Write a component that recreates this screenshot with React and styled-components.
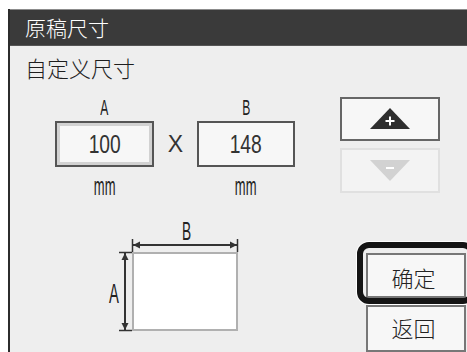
import React from 'react';
import styled, { createGlobalStyle } from 'styled-components';

const Global = createGlobalStyle`
  html, body { margin: 0; padding: 0; background: #ffffff; }
  body {
    width: 467px; height: 352px; overflow: hidden;
    font-family: "Noto Sans CJK SC", "Liberation Sans", sans-serif;
  }
`;

const Page = styled.div`
  width: 467px;
  height: 352px;
  padding: 9px 0 0 8px;
  box-sizing: border-box;
  overflow: hidden;
`;

const Window = styled.div`
  width: 459px;
  height: 343px;
  box-sizing: border-box;
  border-left: 2px solid #2c2c2c;
  background: #eeeeee;
  display: flex;
  flex-direction: column;
  overflow: hidden;
`;

const TitleBar = styled.div`
  flex: none;
  height: 37px;
  box-sizing: border-box;
  background: #3a3a3a;
  border-top: 1px solid #8c8c8c;
  border-bottom: 1px solid #555;
  color: #ffffff;
  font-size: 21px;
  font-weight: 300;
  padding: 0 0 2px 15px;
  display: flex;
  align-items: center;
`;

const Body = styled.div`
  flex: 1;
  padding-top: 9px;
`;

const Subtitle = styled.div`
  height: 24px;
  line-height: 24px;
  font-size: 22px;
  font-weight: 300;
  color: #1e1e1e;
  padding-left: 15px;
`;

const Main = styled.div`
  display: flex;
`;

const Left = styled.div`
  flex: none;
  width: 285px;
  padding: 15px 0 0 45px;
`;

const Dims = styled.div`
  display: grid;
  grid-template-columns: 99px 43px 98px;
  grid-template-rows: 27px 50px 26px;
  align-items: start;
`;

const Narrow = styled.span`
  display: inline-block;
  transform: scaleX(${p => p.$sx});
  font-family: "Liberation Sans", sans-serif;
`;

const Label = styled.div`
  font-size: 22px;
  line-height: 22px;
  text-align: center;
  color: #222;
`;

const Unit = styled.div`
  font-size: 26px;
  line-height: 26px;
  text-align: center;
  color: #222;
`;

const Times = styled.div`
  height: 46px;
  display: flex;
  align-items: center;
  justify-content: center;
  font-family: "Liberation Sans", sans-serif;
  font-size: 23px;
  color: #333;
`;

const ValueBox = styled.div`
  height: 46px;
  box-sizing: border-box;
  border: 2px solid #555555;
  background: #f7f7f7;
  box-shadow: ${p => (p.$active ? 'inset 0 0 0 3px #d2d2d2' : 'none')};
  display: flex;
  align-items: center;
  justify-content: center;
  font-size: 26px;
  line-height: 26px;
  color: #333;
`;

const Diagram = styled.div`
  margin: 21px 0 0 45px;
  line-height: 0;
`;

const Right = styled.div`
  flex: none;
  width: 127px;
  padding-top: 18px;
  display: flex;
  flex-direction: column;
  align-items: flex-start;
`;

const StepButton = styled.div`
  width: 100px;
  height: ${p => (p.$disabled ? '45px' : '44px')};
  box-sizing: border-box;
  margin-top: ${p => (p.$disabled ? '7px' : '0')};
  border: 2px solid ${p => (p.$disabled ? '#e0e0e0' : '#666666')};
  background: ${p => (p.$disabled ? '#f3f3f3' : '#f7f7f7')};
  display: flex;
  align-items: center;
  justify-content: center;
`;

const ActionButton = styled.div`
  position: relative;
  z-index: ${p => (p.$focused ? 1 : 0)};
  flex: none;
  width: 100px;
  height: ${p => (p.$focused ? '45px' : '47px')};
  box-sizing: border-box;
  margin: ${p => (p.$focused ? '60px 0 0 26px' : '7px 0 0 26px')};
  border: 2px solid #777777;
  background: #f7f7f7;
  display: flex;
  align-items: center;
  justify-content: center;
  font-size: 22px;
  font-weight: 300;
  color: #222;
  padding: ${p => (p.$focused ? '3px 5px 0 0' : '0 5px 4px 0')};

  &::before {
    content: '';
    display: ${p => (p.$focused ? 'block' : 'none')};
    position: absolute;
    top: -13px;
    left: -11px;
    right: -11px;
    bottom: -8px;
    border: 6px solid #141414;
    border-radius: 12px;
    box-shadow: 0 0 0 1px #ffffff;
  }
`;

function UpIcon() {
  return (
    <svg width="40" height="22" viewBox="0 0 40 22">
      <polygon points="20,0 40,21 0,21" fill="#2e2e2e" />
      <rect x="15.5" y="12" width="9" height="2" fill="#fff" />
      <rect x="19" y="8.5" width="2" height="9" fill="#fff" />
    </svg>
  );
}

function DownIcon() {
  return (
    <svg width="40" height="22" viewBox="0 0 40 22">
      <polygon points="0,0 40,0 20,21" fill="#d2d2d2" />
      <rect x="16" y="7" width="8" height="2" fill="#fff" />
    </svg>
  );
}

function SizeDiagram() {
  return (
    <svg width="145" height="118" viewBox="0 0 145 118">
      <text x="0" y="0" transform="translate(86.5 22) scale(0.55 1)" textAnchor="middle"
        fontFamily="Liberation Sans, sans-serif" fontSize="25" fill="#222">B</text>
      <text x="0" y="0" transform="translate(14 85) scale(0.53 1)" textAnchor="middle"
        fontFamily="Liberation Sans, sans-serif" fontSize="28" fill="#222">A</text>
      <rect x="33" y="35" width="104" height="77" fill="#ffffff" stroke="#b0b0b0" strokeWidth="2" />
      <line x1="33" y1="27" x2="137" y2="27" stroke="#333" strokeWidth="2" />
      <line x1="32.5" y1="21" x2="32.5" y2="34" stroke="#333" strokeWidth="1.5" />
      <line x1="137.5" y1="21" x2="137.5" y2="34" stroke="#333" strokeWidth="1.5" />
      <polygon points="33,27 40,23.5 40,30.5" fill="#333" />
      <polygon points="137,27 130,23.5 130,30.5" fill="#333" />
      <line x1="25" y1="35" x2="25" y2="112" stroke="#333" strokeWidth="2" />
      <line x1="19" y1="34.5" x2="32" y2="34.5" stroke="#333" strokeWidth="1.5" />
      <line x1="19" y1="112.5" x2="32" y2="112.5" stroke="#333" strokeWidth="1.5" />
      <polygon points="25,35 21.5,42 28.5,42" fill="#333" />
      <polygon points="25,112 21.5,105 28.5,105" fill="#333" />
    </svg>
  );
}

export default function App() {
  return (
    <>
      <Global />
      <Page>
        <Window>
          <TitleBar>原稿尺寸</TitleBar>
          <Body>
            <Subtitle>自定义尺寸</Subtitle>
            <Main>
              <Left>
                <Dims>
                  <Label><Narrow $sx={0.55}>A</Narrow></Label>
                  <div />
                  <Label><Narrow $sx={0.55}>B</Narrow></Label>
                  <ValueBox $active><Narrow $sx={0.74}>100</Narrow></ValueBox>
                  <Times>X</Times>
                  <ValueBox><Narrow $sx={0.74}>148</Narrow></ValueBox>
                  <Unit><Narrow $sx={0.5}>mm</Narrow></Unit>
                  <div />
                  <Unit><Narrow $sx={0.5}>mm</Narrow></Unit>
                </Dims>
                <Diagram>
                  <SizeDiagram />
                </Diagram>
              </Left>
              <Right>
                <StepButton><UpIcon /></StepButton>
                <StepButton $disabled><DownIcon /></StepButton>
                <ActionButton $focused>确定</ActionButton>
                <ActionButton>返回</ActionButton>
              </Right>
            </Main>
          </Body>
        </Window>
      </Page>
    </>
  );
}
